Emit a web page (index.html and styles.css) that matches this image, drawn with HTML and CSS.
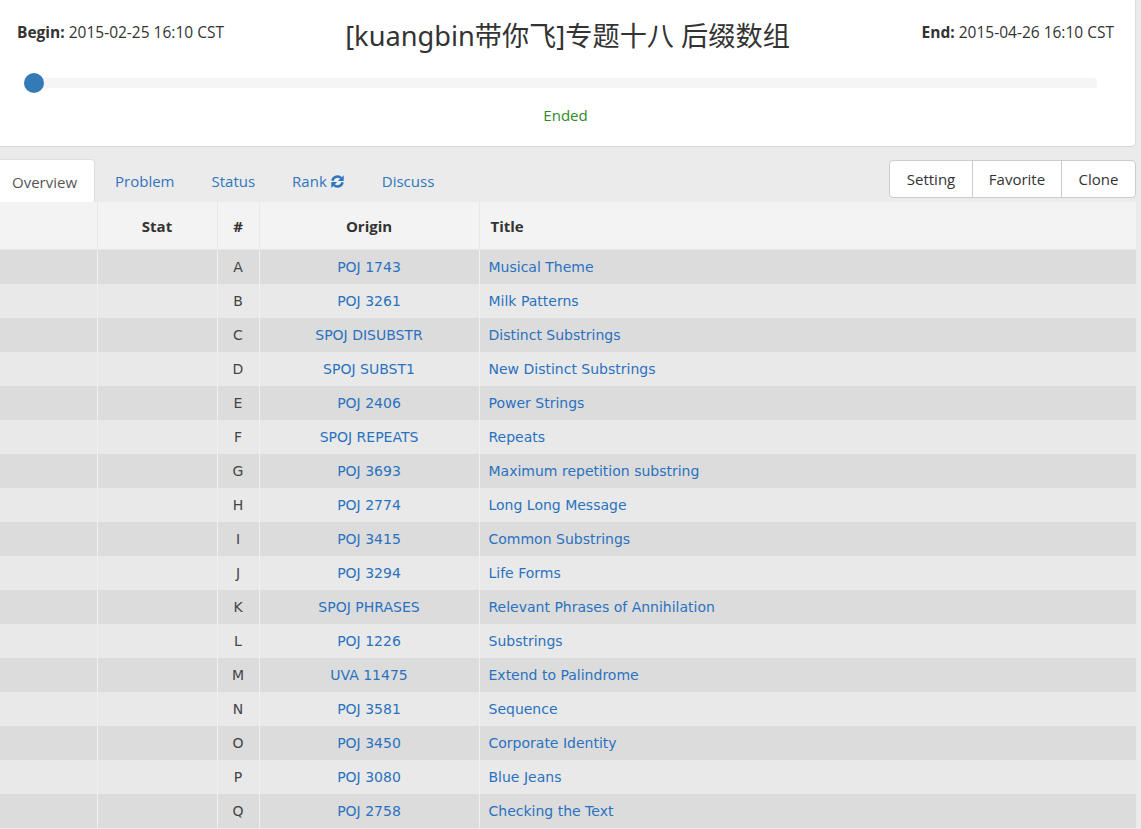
FILE: index.html
```html
<!DOCTYPE html>
<html lang="zh">
<head>
<meta charset="utf-8">
<title>Contest</title>
<link rel="stylesheet" href="styles.css">
</head>
<body>
<div class="page">
  <div class="panel">
    <div class="head-row">
      <div class="time">
        <b>Begin:</b> 2015-02-25 16:10 CST
      </div>
      <h1 class="title">[kuangbin带你飞]专题十八 后缀数组</h1>
      <div class="time end"><b>End:</b> 2015-04-26 16:10 CST</div>
    </div>
    <div class="slider"><span class="knob"></span></div>
    <div class="status">Ended</div>
  </div>

  <div class="navbar">
    <ul class="tabs">
      <li class="tab active">Overview</li>
      <li class="tab">Problem</li>
      <li class="tab">Status</li>
      <li class="tab">Rank <svg class="refresh" viewBox="0 0 16 16" width="15" height="15"><path d="M2.6 7.2 A5.4 5.4 0 0 1 12 4.6" fill="none" stroke="currentColor" stroke-width="2.6"/><path d="M14.6 1.2 V7.4 H8.4 Z" fill="currentColor"/><path d="M13.4 8.8 A5.4 5.4 0 0 1 4 11.4" fill="none" stroke="currentColor" stroke-width="2.6"/><path d="M1.4 14.8 V8.6 H7.6 Z" fill="currentColor"/></svg></li>
      <li class="tab">Discuss</li>
    </ul>
    <div class="btn-group">
      <span class="btn">Setting</span>
      <span class="btn">Favorite</span>
      <span class="btn">Clone</span>
    </div>
  </div>

  <table class="problems">
    <colgroup>
      <col class="c0"><col class="c1"><col class="c2"><col class="c3"><col class="c4">
    </colgroup>
    <thead>
      <tr><th></th><th>Stat</th><th>#</th><th>Origin</th><th class="left">Title</th></tr>
    </thead>
    <tbody>
      <tr><td></td><td></td><td>A</td><td><a>POJ 1743</a></td><td class="left"><a>Musical Theme</a></td></tr>
      <tr><td></td><td></td><td>B</td><td><a>POJ 3261</a></td><td class="left"><a>Milk Patterns</a></td></tr>
      <tr><td></td><td></td><td>C</td><td><a>SPOJ DISUBSTR</a></td><td class="left"><a>Distinct Substrings</a></td></tr>
      <tr><td></td><td></td><td>D</td><td><a>SPOJ SUBST1</a></td><td class="left"><a>New Distinct Substrings</a></td></tr>
      <tr><td></td><td></td><td>E</td><td><a>POJ 2406</a></td><td class="left"><a>Power Strings</a></td></tr>
      <tr><td></td><td></td><td>F</td><td><a>SPOJ REPEATS</a></td><td class="left"><a>Repeats</a></td></tr>
      <tr><td></td><td></td><td>G</td><td><a>POJ 3693</a></td><td class="left"><a>Maximum repetition substring</a></td></tr>
      <tr><td></td><td></td><td>H</td><td><a>POJ 2774</a></td><td class="left"><a>Long Long Message</a></td></tr>
      <tr><td></td><td></td><td>I</td><td><a>POJ 3415</a></td><td class="left"><a>Common Substrings</a></td></tr>
      <tr><td></td><td></td><td>J</td><td><a>POJ 3294</a></td><td class="left"><a>Life Forms</a></td></tr>
      <tr><td></td><td></td><td>K</td><td><a>SPOJ PHRASES</a></td><td class="left"><a>Relevant Phrases of Annihilation</a></td></tr>
      <tr><td></td><td></td><td>L</td><td><a>POJ 1226</a></td><td class="left"><a>Substrings</a></td></tr>
      <tr><td></td><td></td><td>M</td><td><a>UVA 11475</a></td><td class="left"><a>Extend to Palindrome</a></td></tr>
      <tr><td></td><td></td><td>N</td><td><a>POJ 3581</a></td><td class="left"><a>Sequence</a></td></tr>
      <tr><td></td><td></td><td>O</td><td><a>POJ 3450</a></td><td class="left"><a>Corporate Identity</a></td></tr>
      <tr><td></td><td></td><td>P</td><td><a>POJ 3080</a></td><td class="left"><a>Blue Jeans</a></td></tr>
      <tr><td></td><td></td><td>Q</td><td><a>POJ 2758</a></td><td class="left"><a>Checking the Text</a></td></tr>
    </tbody>
  </table>
</div>
</body>
</html>
```

FILE: styles.css
```css
html, body {
  margin: 0;
  padding: 0;
}
body {
  background: #ebebeb;
  font-family: "Open Sans", "Noto Sans", sans-serif;
  color: #333;
  overflow: hidden;
}
.page {
  width: 1136px;
}
.panel {
  background: #fff;
  border-right: 1px solid #dcdcdc;
  border-bottom: 1px solid #d6d6d6;
  border-radius: 0 0 5px 0;
  height: 147px;
  box-sizing: border-box;
  padding: 14px 21px 0 17px;
}
.head-row {
  display: grid;
  grid-template-columns: 1fr auto 1fr;
  align-items: center;
  height: 40px;
}
.time {
  font-size: 15.5px;
  color: #333;
  margin-top: -5px;
  white-space: nowrap;
}
.time.end {
  text-align: right;
}
.time b {
  font-weight: 700;
}
.title {
  margin: 0;
  font-family: "Noto Sans", "Noto Sans CJK SC", sans-serif;
  font-weight: 400;
  font-size: 27.2px;
  color: #333;
  padding-left: 4px;
}
.slider {
  position: relative;
  margin: 24px 17px 0 7px;
  height: 10px;
  background: #f5f5f5;
  border-radius: 2px;
}
.knob {
  position: absolute;
  left: 0;
  top: -5px;
  width: 20px;
  height: 20px;
  border-radius: 50%;
  background: #337ab7;
}
.status {
  text-align: center;
  color: #2e8b1f;
  font-size: 15px;
  margin-top: 17px;
}

.navbar {
  display: flex;
  justify-content: space-between;
  align-items: flex-start;
  margin-top: 12px;
  height: 43px;
}
.tabs {
  list-style: none;
  margin: 0;
  padding: 0;
  display: flex;
  height: 43px;
}
.tab {
  display: flex;
  align-items: center;
  padding: 1px 18px 0 19px;
  font-size: 15px;
  color: #2f76be;
  height: 43px;
  box-sizing: border-box;
}
.tab.active {
  background: #fff;
  color: #555;
  padding-left: 12px;
  padding-right: 17px;
  border-radius: 0 4px 0 0;
  border-right: 1px solid #dedede;
  border-top: 1px solid #dedede;
}
.tab:nth-child(2) {
  padding-left: 20px;
}
.refresh {
  margin-left: 3px;
  color: #2f76be;
}
.btn-group {
  display: flex;
  background: #fff;
  border: 1px solid #ccc;
  border-radius: 4px;
  height: 38px;
  box-sizing: border-box;
  margin-top: 1px;
}
.btn {
  display: flex;
  align-items: center;
  justify-content: center;
  font-size: 15px;
  color: #333;
  border-left: 1px solid #ccc;
}
.btn:first-child {
  border-left: 0;
  width: 82px;
}
.btn:nth-child(2) {
  width: 88px;
}
.btn:nth-child(3) {
  width: 73px;
}

.problems {
  width: 1136px;
  border-collapse: collapse;
  table-layout: fixed;
}
.c0 { width: 97px; }
.c1 { width: 120px; }
.c2 { width: 42px; }
.c3 { width: 220px; }
.problems th {
  height: 47px;
  background: #f3f3f3;
  font-family: "Open Sans", "Noto Sans", sans-serif;
  font-weight: 700;
  font-size: 15px;
  color: #333;
  text-align: center;
  border-left: 1px solid #e8e8e8;
  border-bottom: 1px solid #e6e6e6;
  padding: 0 10px;
}
.problems th.left {
  padding-left: 11px;
}
.problems td {
  height: 34px;
  box-sizing: border-box;
  padding: 0 9px;
  font-family: "DejaVu Sans", Verdana, sans-serif;
  font-size: 14px;
  color: #444;
  text-align: center;
  border-left: 1px solid #f0f0f0;
}
.problems th:first-child,
.problems td:first-child {
  border-left: 0;
}
.problems tbody tr:nth-child(odd) td {
  background: #dcdcdc;
}
.problems tbody tr:nth-child(even) td {
  background: #e9e9e9;
}
.problems .left {
  text-align: left;
}
.problems a {
  color: #2a72c0;
  text-decoration: none;
}
```
